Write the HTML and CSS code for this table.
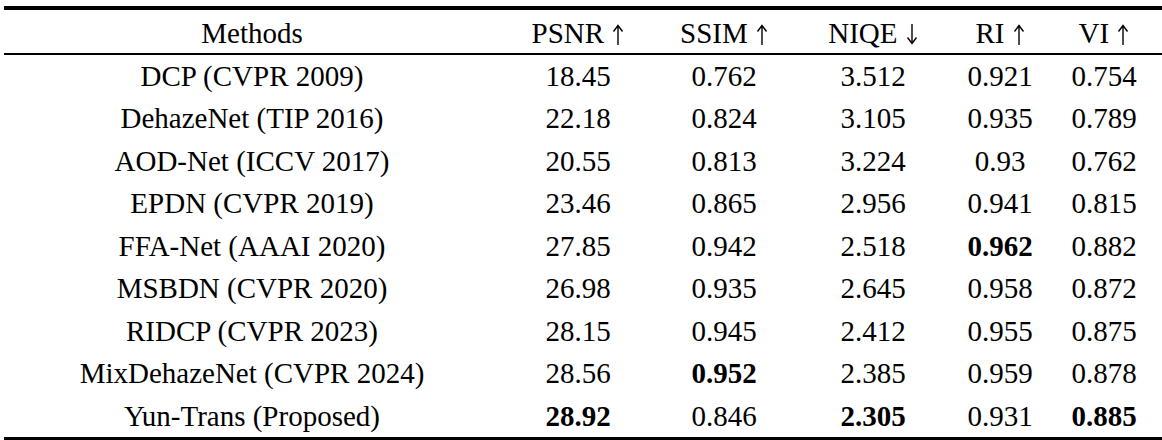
FILE: index.html
```html
<!DOCTYPE html>
<html lang="en">
<head>
<meta charset="utf-8">
<title>Dehazing comparison</title>
<link rel="stylesheet" href="styles.css">
</head>
<body>
<table class="results">
  <colgroup>
    <col class="c-method">
    <col class="c-psnr">
    <col class="c-ssim">
    <col class="c-niqe">
    <col class="c-ri">
    <col class="c-vi">
  </colgroup>
  <thead>
    <tr>
      <th>Methods</th>
      <th>PSNR <svg class="arrow" viewBox="0 0 12 21" aria-label="↑"><path d="M6 1.5V21M1.5 7.5L6 1.5L10.5 7.5"/></svg></th>
      <th>SSIM <svg class="arrow" viewBox="0 0 12 21" aria-label="↑"><path d="M6 1.5V21M1.5 7.5L6 1.5L10.5 7.5"/></svg></th>
      <th>NIQE <svg class="arrow" viewBox="0 0 12 21" aria-label="↓"><path d="M6 0V19.5M1.5 13.5L6 19.5L10.5 13.5"/></svg></th>
      <th>RI <svg class="arrow" viewBox="0 0 12 21" aria-label="↑"><path d="M6 1.5V21M1.5 7.5L6 1.5L10.5 7.5"/></svg></th>
      <th>VI <svg class="arrow" viewBox="0 0 12 21" aria-label="↑"><path d="M6 1.5V21M1.5 7.5L6 1.5L10.5 7.5"/></svg></th>
    </tr>
  </thead>
  <tbody>
    <tr><td>DCP (CVPR 2009)</td><td>18.45</td><td>0.762</td><td>3.512</td><td>0.921</td><td>0.754</td></tr>
    <tr><td>DehazeNet (TIP 2016)</td><td>22.18</td><td>0.824</td><td>3.105</td><td>0.935</td><td>0.789</td></tr>
    <tr><td>AOD-Net (ICCV 2017)</td><td>20.55</td><td>0.813</td><td>3.224</td><td>0.93</td><td>0.762</td></tr>
    <tr><td>EPDN (CVPR 2019)</td><td>23.46</td><td>0.865</td><td>2.956</td><td>0.941</td><td>0.815</td></tr>
    <tr><td>FFA-Net (AAAI 2020)</td><td>27.85</td><td>0.942</td><td>2.518</td><td class="best">0.962</td><td>0.882</td></tr>
    <tr><td>MSBDN (CVPR 2020)</td><td>26.98</td><td>0.935</td><td>2.645</td><td>0.958</td><td>0.872</td></tr>
    <tr><td>RIDCP (CVPR 2023)</td><td>28.15</td><td>0.945</td><td>2.412</td><td>0.955</td><td>0.875</td></tr>
    <tr><td>MixDehazeNet (CVPR 2024)</td><td>28.56</td><td class="best">0.952</td><td>2.385</td><td>0.959</td><td>0.878</td></tr>
    <tr class="last"><td>Yun-Trans (Proposed)</td><td class="best">28.92</td><td>0.846</td><td class="best">2.305</td><td>0.931</td><td class="best">0.885</td></tr>
  </tbody>
</table>
</body>
</html>
```
FILE: styles.css
```css
html, body {
  margin: 0;
  padding: 0;
  background: #ffffff;
}

body {
  font-family: "Liberation Serif", "Times New Roman", serif;
  font-size: 29px;
  color: #000000;
}

.results {
  margin: 6px 0 0 4px;
  width: 1158px;
  table-layout: fixed;
  border-collapse: separate;
  border-spacing: 0;
}

.c-method { width: 496px; }
.c-psnr { width: 156px; }
.c-ssim { width: 136px; }
.c-niqe { width: 162px; }
.c-ri { width: 92px; }
.c-vi { width: 116px; }

.results th,
.results td {
  padding: 0;
  text-align: center;
  white-space: nowrap;
  font-weight: normal;
}

.results th {
  border-top: 4px solid #000;
  border-bottom: 2px solid #000;
  padding-top: 3px;
  line-height: 40px;
}

.results td {
  line-height: 42.45px;
}

.results .last td {
  border-bottom: 3px solid #000;
}

.results .best {
  font-weight: bold;
}

.arrow {
  width: 12px;
  height: 21px;
  vertical-align: -2px;
  margin-left: 1px;
  fill: none;
  stroke: #000;
  stroke-width: 1.4;
}
```
